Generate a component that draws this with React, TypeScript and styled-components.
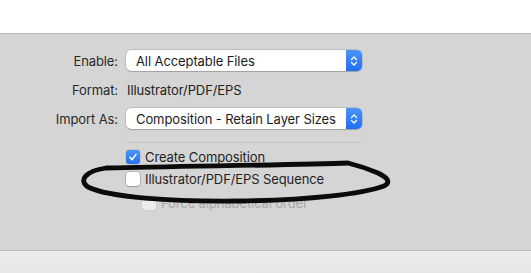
import React from "react";
import styled, { createGlobalStyle } from "styled-components";

const GlobalStyle = createGlobalStyle`
    html, body {
        margin: 0;
        padding: 0;
        background: #ffffff;
    }
    body {
        font-family: "Inter", "Liberation Sans", sans-serif;
        font-size: 13px;
        -webkit-font-smoothing: antialiased;
    }
`;

const Page = styled.div`
    position: relative;
    width: 531px;
    height: 273px;
    display: flex;
    flex-direction: column;
    overflow: hidden;
`;

const TopArea = styled.div`
    height: 33px;
    background: #ffffff;
`;

const Panel = styled.div`
    height: 217px;
    background: #d5d5d5;
    border-top: 1px solid #b4b4b4;
    padding-top: 16px;
    box-sizing: border-box;
`;

const Footer = styled.div`
    flex: 1;
    border-top: 1px solid #bababa;
    background: linear-gradient(#ededed, #e6e6e6);
`;

const Form = styled.div`
    display: grid;
    grid-template-columns: 118px 236px;
    grid-auto-rows: 21px;
    column-gap: 8px;
    row-gap: 8px;
    align-items: center;
`;

const Label = styled.div`
    text-align: right;
    color: #2a2a2a;
    letter-spacing: -0.1px;
`;

const Value = styled.div`
    color: #222222;
    letter-spacing: -0.1px;
    padding-left: 1px;
`;

const Popup = styled.div`
    height: 21px;
    box-sizing: border-box;
    display: flex;
    align-items: stretch;
    background: #ffffff;
    border-radius: 5px;
    box-shadow: 0 0 0 0.5px rgba(0, 0, 0, 0.22), 0 1px 1px rgba(0, 0, 0, 0.15);
    overflow: hidden;
`;

const PopupText = styled.div`
    flex: 1;
    display: flex;
    align-items: center;
    padding-left: 10px;
    color: #1c1c1c;
    letter-spacing: -0.1px;
    white-space: nowrap;
`;

const Stepper = styled.div`
    width: 16px;
    display: flex;
    align-items: center;
    justify-content: center;
    background: linear-gradient(#4b94f8, #1f6ef2);
`;

const Options = styled.div`
    margin-left: 126px;
    width: 236px;
    margin-top: 13px;
    border-top: 1px solid #c4c4c4;
    padding-top: 7px;
    display: flex;
    flex-direction: column;
    gap: 8px;
`;

const CheckRow = styled.div<{ $indent?: boolean; $disabled?: boolean }>`
    display: flex;
    align-items: center;
    gap: 5px;
    height: 14px;
    margin-left: ${({ $indent }) => ($indent ? "16px" : "0")};
    margin-top: ${({ $indent }) => ($indent ? "2px" : "0")};
    color: ${({ $disabled }) => ($disabled ? "#a9a9a9" : "#1f1f1f")};
    white-space: nowrap;
    letter-spacing: -0.1px;
`;

const Box = styled.div<{ $checked?: boolean; $disabled?: boolean }>`
    width: 14px;
    height: 14px;
    box-sizing: border-box;
    border-radius: 3px;
    display: flex;
    align-items: center;
    justify-content: center;
    background: ${({ $checked }) => ($checked ? "linear-gradient(#4a93f8, #2673f2)" : "#ffffff")};
    box-shadow: ${({ $checked, $disabled }) =>
        $checked
            ? "0 0 0 0.5px rgba(0,0,0,0.15)"
            : $disabled
            ? "0 0 0 0.5px rgba(0,0,0,0.12)"
            : "0 0 0 0.5px rgba(0,0,0,0.3), 0 1px 1px rgba(0,0,0,0.12)"};
    opacity: ${({ $disabled }) => ($disabled ? 0.55 : 1)};
`;

const Scribble = styled.svg`
    position: absolute;
    left: 0;
    top: 0;
    pointer-events: none;
`;

const Chevrons = () => (
    <svg width="8" height="12" viewBox="0 0 8 12">
        <path d="M1.5 4.5 L4 2 L6.5 4.5 M1.5 7.5 L4 10 L6.5 7.5" fill="none" stroke="#ffffff" strokeWidth="1.3" strokeLinecap="round" strokeLinejoin="round" />
    </svg>
);

const Check = () => (
    <svg width="10" height="10" viewBox="0 0 10 10">
        <path d="M2 5.3 L4.2 7.6 L8 2.4" fill="none" stroke="#ffffff" strokeWidth="1.6" strokeLinecap="round" strokeLinejoin="round" />
    </svg>
);

const Select: React.FunctionComponent<{ value: string }> = ({ value }) => (
    <Popup>
        <PopupText>{value}</PopupText>
        <Stepper>
            <Chevrons />
        </Stepper>
    </Popup>
);

const Checkbox: React.FunctionComponent<{ label: string; checked?: boolean; disabled?: boolean; indent?: boolean }> = ({ label, checked, disabled, indent }) => (
    <CheckRow $indent={indent} $disabled={disabled}>
        <Box $checked={checked} $disabled={disabled}>{checked ? <Check /> : null}</Box>
        <span>{label}</span>
    </CheckRow>
);

export default function App() {
    return (
        <Page>
            <GlobalStyle />
            <TopArea />
            <Panel>
                <Form>
                    <Label>Enable:</Label>
                    <Select value="All Acceptable Files" />
                    <Label>Format:</Label>
                    <Value>Illustrator/PDF/EPS</Value>
                    <Label>Import As:</Label>
                    <Select value="Composition - Retain Layer Sizes" />
                </Form>
                <Options>
                    <Checkbox label="Create Composition" checked />
                    <Checkbox label="Illustrator/PDF/EPS Sequence" />
                    <Checkbox label="Force alphabetical order" disabled indent />
                </Options>
            </Panel>
            <Footer />
            <Scribble width="531" height="273" viewBox="0 0 531 273">
                <path
                    d="M348 163 C300 165 190 166 106 168 C86 171 78 180 88 187 C108 197 170 202 240 201 C310 200 362 194 384 186 C391 182 388 178 378 173 C366 168 356 165 348 163 Z"
                    fill="none"
                    stroke="#0b0b0b"
                    strokeWidth="4.8"
                    strokeLinejoin="round"
                />
            </Scribble>
        </Page>
    );
}
